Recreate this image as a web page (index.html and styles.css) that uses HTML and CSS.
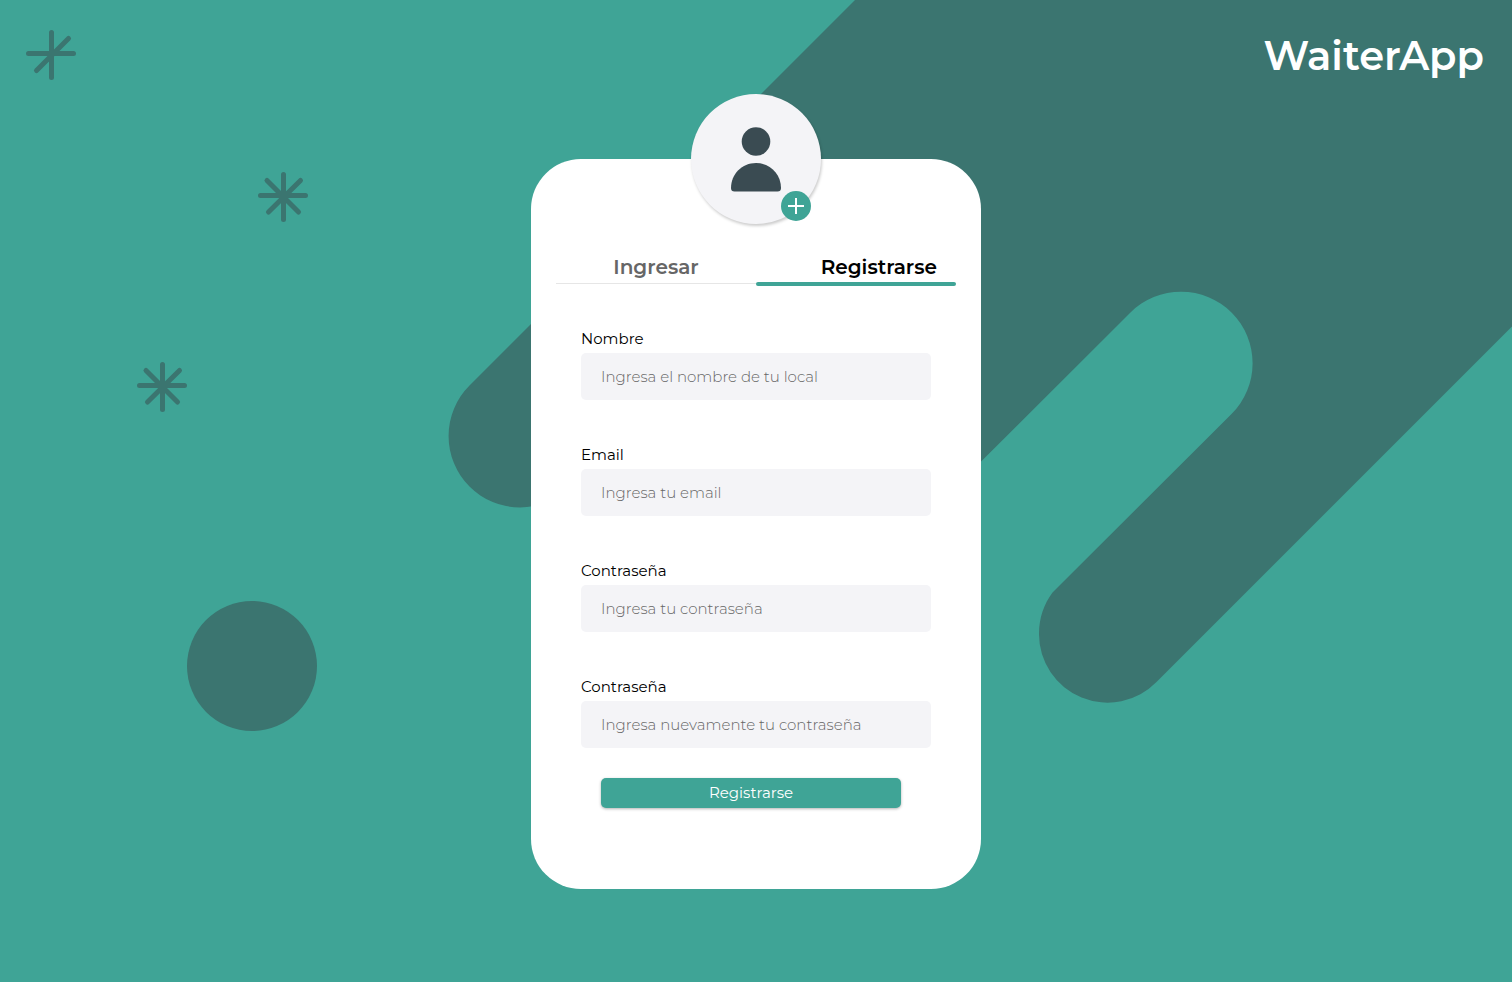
FILE: index.html
```html
<!DOCTYPE html>
<html lang="es">
<head>
<meta charset="utf-8">
<meta name="viewport" content="width=device-width, initial-scale=1">
<title>WaiterApp</title>
<link rel="stylesheet" href="styles.css">
</head>
<body class="page">
<svg class="backdrop" viewBox="0 0 1512 982" preserveAspectRatio="xMidYMin slice" aria-hidden="true">
  <path class="shape" d="M855 0 L469.500 385.500 A71 71 0 0 0 570.500 486.500 L660 397 A71.500 71.500 0 0 1 761 499 L711 549 A71.500 71.500 0 0 0 801 641 L1130.500 312.500 A71.500 71.500 0 0 1 1231.500 414 L1052.500 592.500 C1044 604 1039 618 1039 634 A68.500 68.500 0 0 0 1156.500 682 L1512 326.500 V0 Z"/>
  <circle class="shape" cx="252" cy="666" r="65"/>
  <g class="sparks">
    <path d="M51.500 32.500V77.500M28.500 53.500H73.500M36.500 70.500L68.500 38.500"/>
    <path d="M283.500 174.500V219.500M260.500 195.500H305.500M268.500 212L300.500 180.500M267 180.500L298.500 212"/>
    <path d="M162.500 364.500V409.500M139.500 385.500H184.500M147.500 402L179.500 370.500M146 370.500L177.500 402"/>
  </g>
</svg>

<header class="header">
  <h1 class="brand">WaiterApp</h1>
</header>

<main class="main">
  <div class="avatar">
    <svg class="avatar-icon" viewBox="0 0 50 65" aria-hidden="true">
      <circle cx="25" cy="14.500" r="14.300"/>
      <path d="M0 61C0 47 11 36 25 36S50 47 50 61Q50 64.500 46.500 64.500H3.500Q0 64.500 0 61Z"/>
    </svg>
    <button class="avatar-add" type="button" aria-label="Agregar foto">
      <svg class="plus" viewBox="0 0 16 16" aria-hidden="true"><path d="M8 0V16M0 8H16"/></svg>
    </button>
  </div>
  <section class="card">
    <nav class="tabs">
      <a class="tab" href="#ingresar">Ingresar</a>
      <a class="tab tab-active" href="#registrarse" aria-current="page">Registrarse</a>
    </nav>
    <form class="form">
      <div class="field">
        <label class="label" for="nombre">Nombre</label>
        <input class="input" id="nombre" type="text" placeholder="Ingresa el nombre de tu local">
      </div>
      <div class="field">
        <label class="label" for="email">Email</label>
        <input class="input" id="email" type="email" placeholder="Ingresa tu email">
      </div>
      <div class="field">
        <label class="label" for="clave">Contraseña</label>
        <input class="input" id="clave" type="password" placeholder="Ingresa tu contraseña">
      </div>
      <div class="field">
        <label class="label" for="clave2">Contraseña</label>
        <input class="input" id="clave2" type="password" placeholder="Ingresa nuevamente tu contraseña">
      </div>
      <button class="submit" type="submit">Registrarse</button>
    </form>
  </section>
</main>
</body>
</html>
```

FILE: styles.css
```css
* {
  box-sizing: border-box;
}

.page {
  margin: 0;
  min-height: 100vh;
  background: #3fa496;
  color: #000;
  font-family: Montserrat, Inter, sans-serif;
  font-size: 15px;
  line-height: 20px;
}

.backdrop {
  position: absolute;
  inset: 0;
  z-index: -1;
  width: 100%;
  height: 100%;
}

.shape {
  fill: #3b7570;
}

.sparks {
  fill: none;
  stroke: #3b7570;
  stroke-width: 5;
  stroke-linecap: round;
}

.header {
  display: flex;
  justify-content: flex-end;
  padding: 32px 28px 14px;
}

.brand {
  margin: 0;
  color: #fff;
  font-size: 40px;
  font-weight: 600;
  line-height: 48px;
}

.main {
  display: flex;
  flex-direction: column;
  align-items: center;
  padding: 0 16px 48px;
}

.avatar {
  position: relative;
  z-index: 1;
  display: flex;
  justify-content: center;
  align-items: center;
  width: 130px;
  height: 130px;
  margin-bottom: -65px;
  border-radius: 50%;
  background: #f4f4f7;
  box-shadow: 1px 2px 3px rgba(0, 0, 0, 0.2);
}

.avatar-icon {
  width: 50px;
  height: 65px;
  fill: #3a4b52;
}

.avatar-add {
  position: absolute;
  right: 10px;
  bottom: 3px;
  display: grid;
  place-items: center;
  width: 30px;
  height: 30px;
  padding: 0;
  border: 0;
  border-radius: 50%;
  background: #3fa496;
}

.plus {
  width: 16px;
  height: 16px;
  stroke: #fff;
  stroke-width: 2;
}

.card {
  width: 100%;
  max-width: 450px;
  padding: 93px 25px 81px;
  border-radius: 50px;
  background: #fff;
}

.tabs {
  display: grid;
  grid-template-columns: 1fr 1fr;
  align-items: start;
}

.tab {
  padding-bottom: 1px;
  border-bottom: 1px solid #e6e6e6;
  color: #666;
  font-size: 20px;
  font-weight: 600;
  line-height: 30px;
  text-align: center;
  text-decoration: none;
}

.tab-active {
  position: relative;
  padding-right: 19px;
  color: #000;
  text-align: right;
}

.tab-active::after {
  content: "";
  position: absolute;
  right: 0;
  bottom: -3px;
  left: 0;
  height: 4px;
  border-radius: 2px;
  background: #3fa496;
}

.form {
  display: flex;
  flex-direction: column;
  gap: 45px;
  padding: 45px 25px 0;
}

.field {
  display: flex;
  flex-direction: column;
  gap: 4px;
}

.input {
  width: 100%;
  height: 47px;
  padding: 0 20px;
  border: 0;
  border-radius: 5px;
  background: #f4f4f7;
  font: inherit;
  font-weight: 300;
}

.input::placeholder {
  color: #666;
}

.submit {
  height: 30px;
  margin: -15px 30px 0 20px;
  padding: 0;
  border: 0;
  border-radius: 5px;
  background: #3fa496;
  box-shadow: 0 1px 3px rgba(0, 0, 0, 0.3);
  color: #fff;
  font: inherit;
}
```
